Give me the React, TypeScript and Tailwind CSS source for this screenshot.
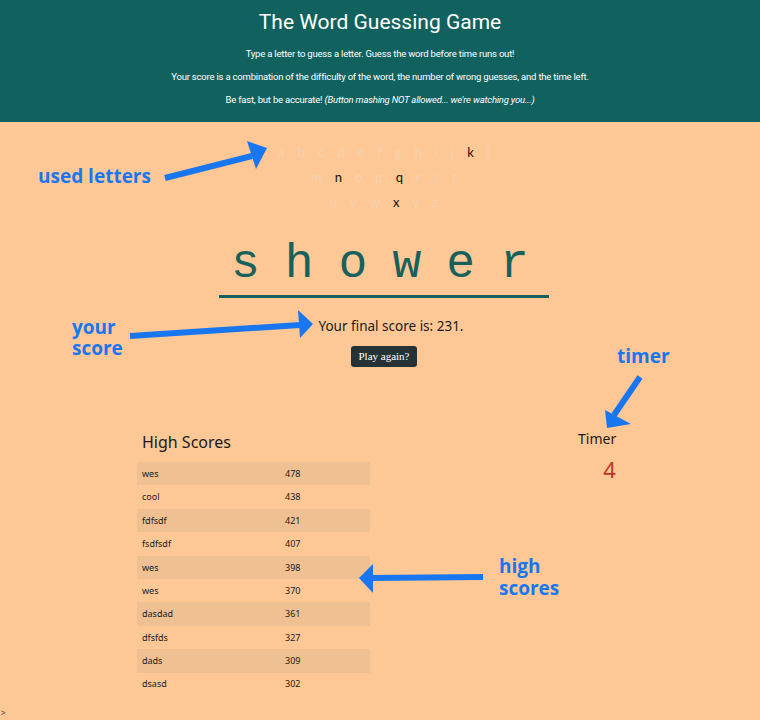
import React from "react";

const rows = [
  ["a", "b", "c", "d", "e", "f", "g", "h", "i", "j", "k", "l"],
  ["m", "n", "o", "p", "q", "r", "s", "t"],
  ["u", "v", "w", "x", "y", "z"],
];
const active = new Set(["k", "n", "q", "x"]);

const scores: [string, number][] = [
  ["wes", 478],
  ["cool", 438],
  ["fdfsdf", 421],
  ["fsdfsdf", 407],
  ["wes", 398],
  ["wes", 370],
  ["dasdad", 361],
  ["dfsfds", 327],
  ["dads", 309],
  ["dsasd", 302],
];

const note = "absolute font-['Open_Sans',sans-serif] text-[19px] font-bold text-[#1877f0]";

export default function App() {
  return (
    <div className="relative min-h-[720px] w-full overflow-hidden bg-[#fdc896] font-['Noto_Sans',sans-serif] text-[#1a1a1a]">
      <header className="flex h-[122px] flex-col items-center bg-[#11625f] pt-[8px] font-['Roboto',sans-serif] text-white">
        <h1 className="text-[21px] leading-[28px] font-normal">The Word Guessing Game</h1>
        <div className="mt-[12px] flex flex-col items-center gap-[11px] text-[9.5px] leading-[12px] tracking-[-0.2px]">
          <p>Type a letter to guess a letter. Guess the word before time runs out!</p>
          <p>Your score is a combination of the difficulty of the word, the number of wrong guesses, and the time left.</p>
          <p>
            Be fast, but be accurate! <i>(Button mashing NOT allowed... we're watching you...)</i>
          </p>
        </div>
      </header>

      <main className="flex flex-col items-center pl-[8px]">
        <div className="mt-[18px] flex flex-col items-center font-['Lato',sans-serif] text-[13px] leading-[25px]">
          {rows.map((r, i) => (
            <div key={i} className="flex">
              {r.map((l) => (
                <span key={l} className={`px-[6.5px] ${active.has(l) ? "text-[#111]" : "text-[#f3d2b0]"}`}>
                  {l}
                </span>
              ))}
            </div>
          ))}
        </div>

        <div className="mt-[18px] w-[330px] border-b-[3px] border-[#15605c] pl-[12px] text-center">
          <span className="font-['Liberation_Mono',monospace] text-[48px] leading-[62px] tracking-[25px] text-[#17615d]">
            shower
          </span>
        </div>

        <p className="mt-[19px] pl-[14px] text-[13.5px] leading-[18px]">Your final score is: 231.</p>

        <button className="mt-[11px] h-[21px] rounded-[3px] bg-[#263236] px-[7px] font-['Liberation_Serif',serif] text-[11px] text-white">
          Play again?
        </button>
      </main>

      <section className="mt-[64px] flex items-start">
        <div className="ml-[137px] w-[233px]">
          <h2 className="pl-[5px] text-[16px] leading-[22px]">High Scores</h2>
          <div className="mt-[9px] text-[9px]">
            {scores.map(([n, s], i) => (
              <div key={i} className={`flex h-[23.4px] items-center pl-[5px] ${i % 2 === 0 ? "bg-[#efc192]" : ""}`}>
                <span className="w-[143px]">{n}</span>
                <span>{s}</span>
              </div>
            ))}
          </div>
        </div>
        <div className="ml-[208px] mt-[-2px] flex flex-col items-center">
          <span className="text-[14px] leading-[20px]">Timer</span>
          <span className="mt-[5px] pl-[25px] text-[22px] leading-[30px] text-[#c0332b]">4</span>
        </div>
      </section>

      <span className="absolute bottom-[2px] left-[1px] text-[8px] leading-[10px] text-[#333]">&gt;</span>

      {/* annotations */}
      <svg className="pointer-events-none absolute left-0 top-0" width="760" height="720" viewBox="0 0 760 720">
        <g fill="#1877f0" stroke="#1877f0">
          <line x1="165" y1="178" x2="252" y2="156" strokeWidth="6" />
          <polygon points="267,148 247,141 256,169" stroke="none" />
          <line x1="130" y1="336" x2="300" y2="325" strokeWidth="6" />
          <polygon points="313,324 298,310 300,338" stroke="none" />
          <line x1="640" y1="377" x2="614" y2="415" strokeWidth="6" />
          <polygon points="607,428 605,410 631,424" stroke="none" />
          <line x1="483" y1="577" x2="370" y2="578" strokeWidth="6" />
          <polygon points="359,578 373,564 373,593" stroke="none" />
        </g>
      </svg>
      <div className={`${note} left-[38px] top-[163px] leading-[26px]`}>used letters</div>
      <div className={`${note} left-[72px] top-[317px] flex flex-col leading-[21px]`}>
        <span>your</span>
        <span>score</span>
      </div>
      <div className={`${note} left-[617px] top-[343px] leading-[26px]`}>timer</div>
      <div className={`${note} left-[499px] top-[555px] flex flex-col leading-[22px]`}>
        <span>high</span>
        <span>scores</span>
      </div>
    </div>
  );
}
